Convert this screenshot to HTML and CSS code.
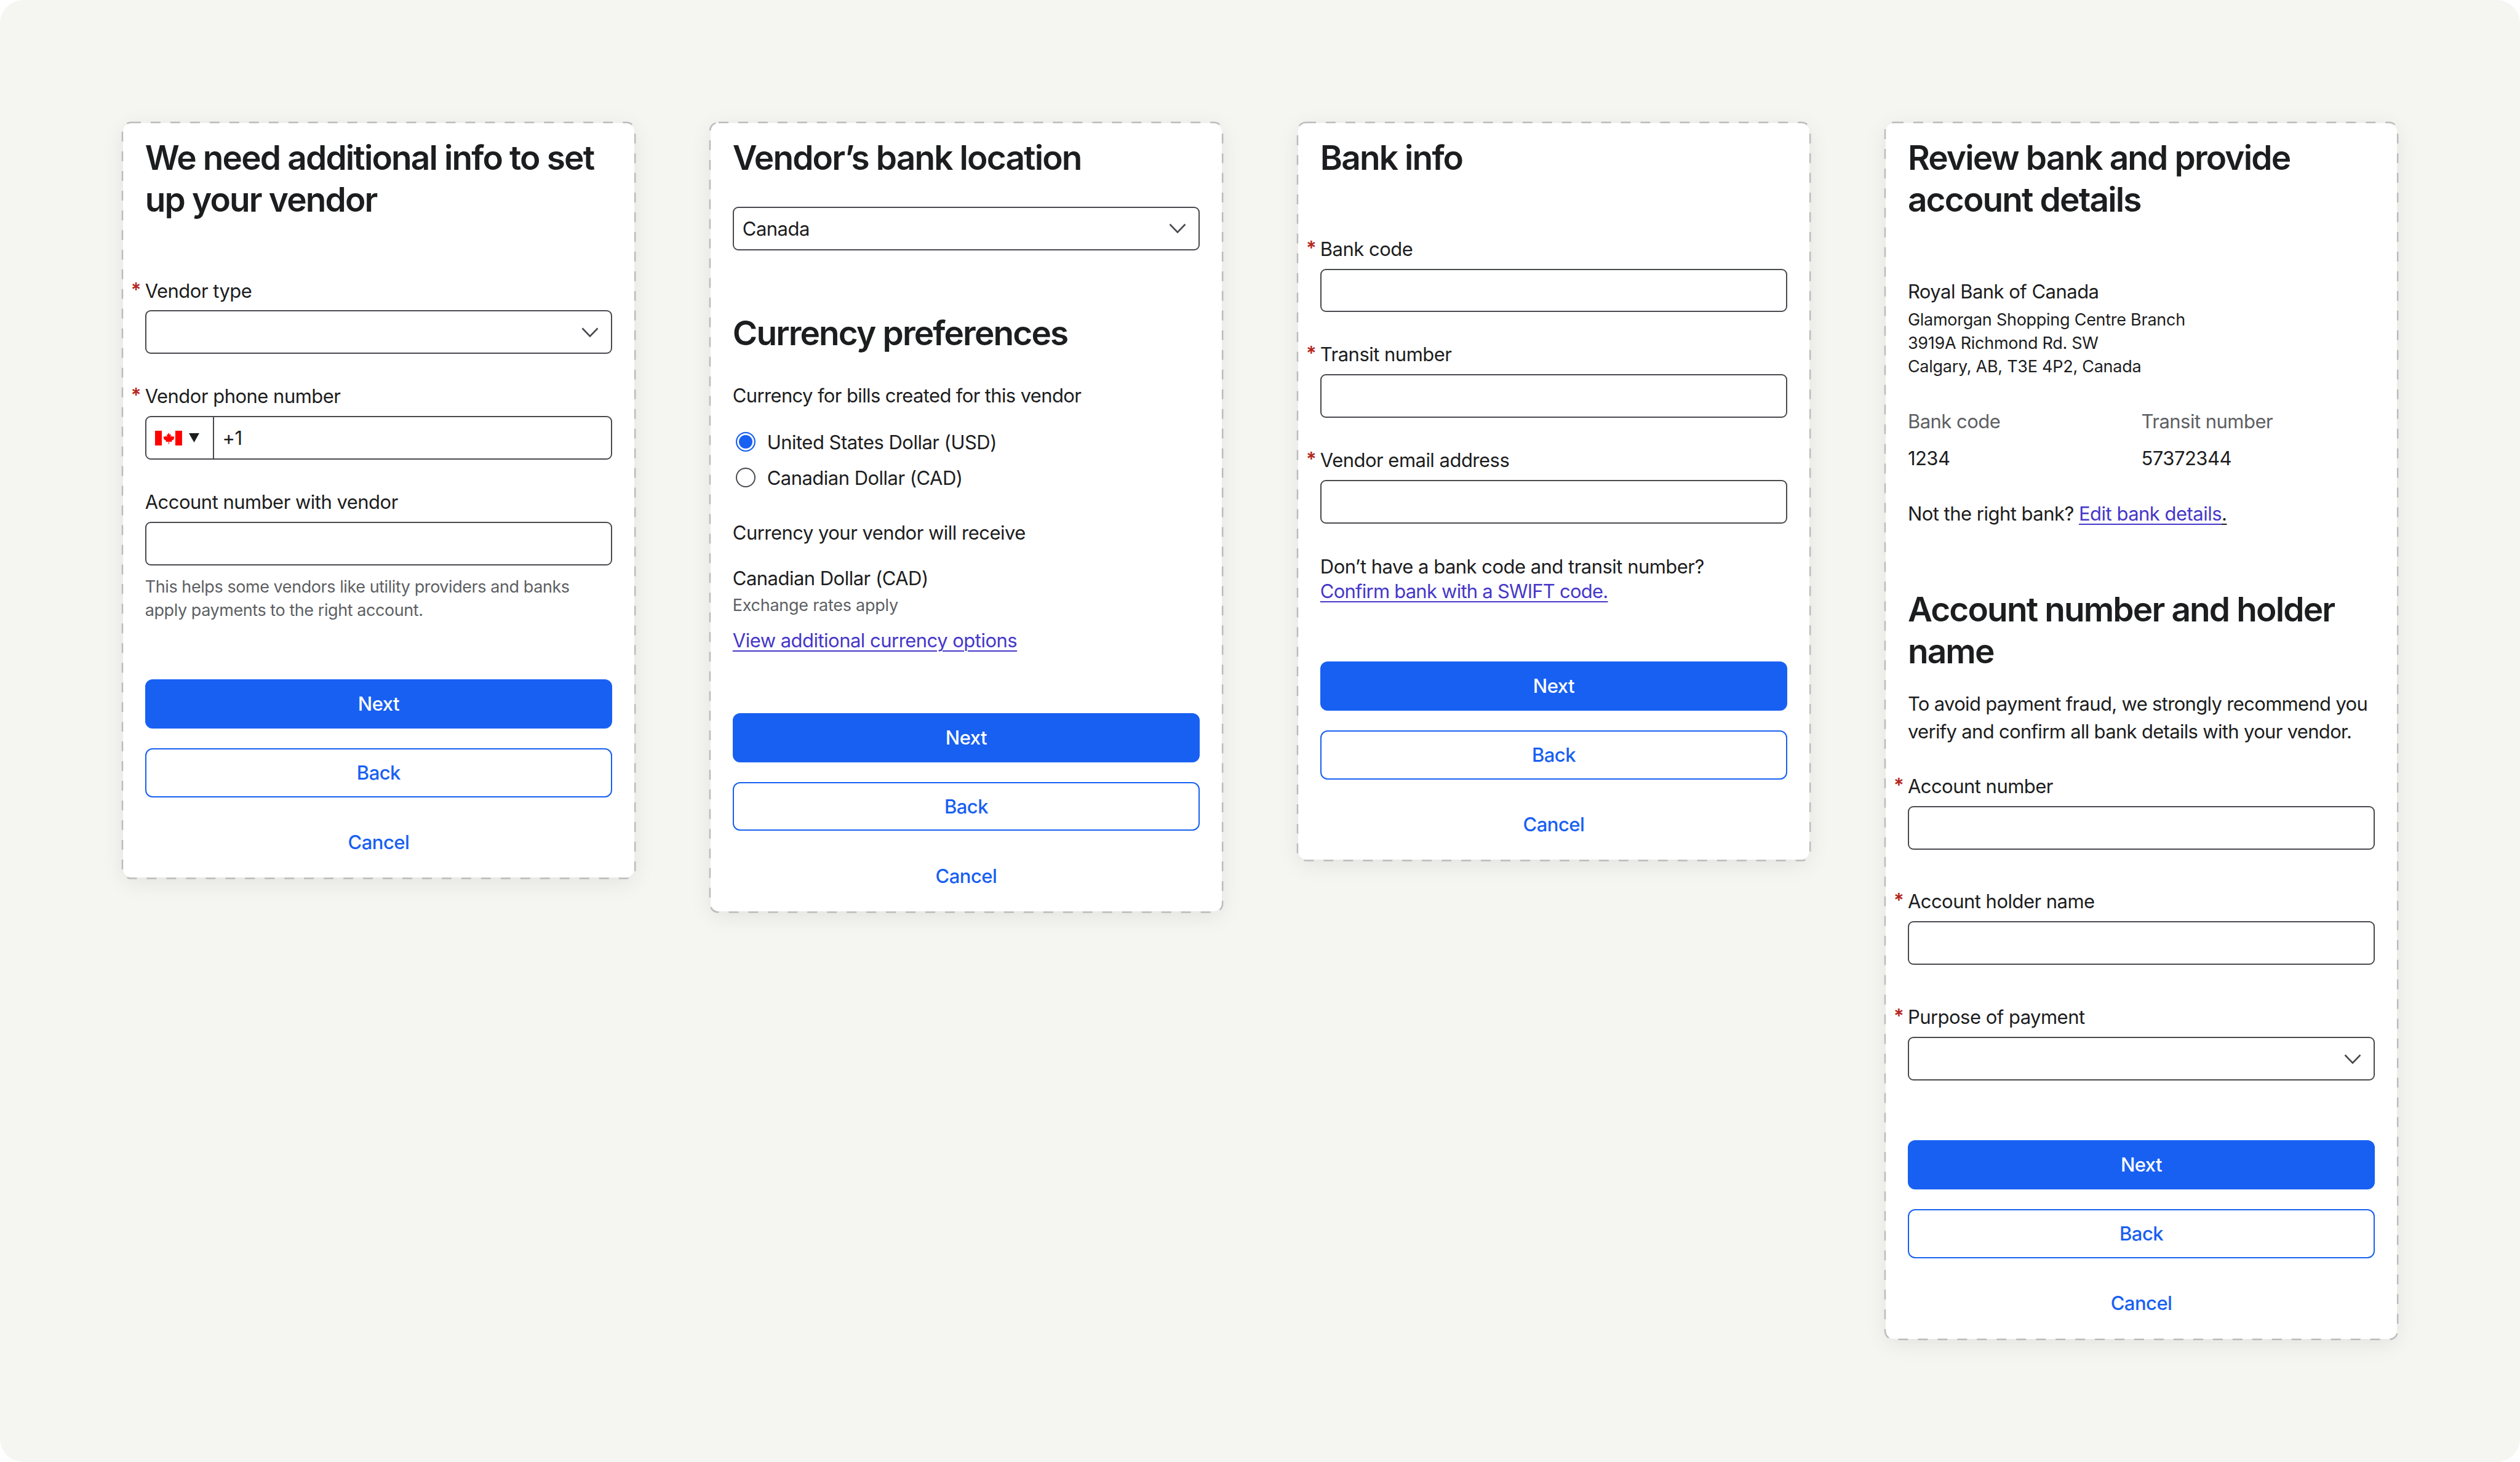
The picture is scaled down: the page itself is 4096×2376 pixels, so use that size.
FILE: index.html
```html
<!DOCTYPE html>
<html lang="en">
<head>
    <meta charset="UTF-8">
    <title>Vendor setup flow</title>
    <link rel="stylesheet" href="styles.css">
</head>
<body>
    <div class="canvas">
        <div class="card">
            <svg class="dashes"><rect width="100%" height="100%" rx="14"/></svg>
            <h1>We need additional info to set up your vendor</h1>
            <div class="field first required">
                <label>Vendor type</label>
                <div class="input select">
                    <svg class="chevron" viewBox="0 0 28 16"><path d="M1.5 1.5 14 14.5 26.5 1.5"/></svg>
                </div>
            </div>
            <div class="field required">
                <label>Vendor phone number</label>
                <div class="input phone">
                    <div class="flag-box">
                        <svg class="flag" viewBox="0 0 44 24">
                            <rect width="44" height="24" fill="#fff"/>
                            <rect width="11" height="24" fill="#f00"/>
                            <rect x="33" width="11" height="24" fill="#f00"/>
                            <path fill="#f00" d="M22 3l2 3.6 2-.9-.8 4.6 2.5-2.3.6 1.7 3.2-.5-1 3 1.1.7-4.7 3.7.5 1.7-4.4-.6V22h-1v-4.3l-4.4.6.5-1.7-4.7-3.7 1.1-.7-1-3 3.2.5.6-1.7 2.5 2.3-.8-4.6 2 .9z"/>
                        </svg>
                        <svg class="caret" viewBox="0 0 16 14"><path d="M0 0h16L8 14z"/></svg>
                    </div>
                    <span class="phone-code">+1</span>
                </div>
            </div>
            <div class="field">
                <label>Account number with vendor</label>
                <div class="input"></div>
                <p class="hint">This helps some vendors like utility providers and banks apply payments to the right account.</p>
            </div>
            <div class="actions actions-a">
                <a class="btn primary">Next</a>
                <a class="btn outline">Back</a>
                <a class="btn plain">Cancel</a>
            </div>
        </div>

        <div class="card">
            <svg class="dashes"><rect width="100%" height="100%" rx="14"/></svg>
            <h1>Vendor’s bank location</h1>
            <div class="input select country">
                <span>Canada</span>
                <svg class="chevron" viewBox="0 0 28 16"><path d="M1.5 1.5 14 14.5 26.5 1.5"/></svg>
            </div>
            <h1 class="second">Currency preferences</h1>
            <p class="text bills">Currency for bills created for this vendor</p>
            <div class="radio-row checked"><span class="radio"></span>United States Dollar (USD)</div>
            <div class="radio-row"><span class="radio"></span>Canadian Dollar (CAD)</div>
            <p class="text receive">Currency your vendor will receive</p>
            <p class="text cad">Canadian Dollar (CAD)</p>
            <p class="small muted rates">Exchange rates apply</p>
            <p class="text view"><a class="link">View additional currency options</a></p>
            <div class="actions actions-b">
                <a class="btn primary">Next</a>
                <a class="btn outline">Back</a>
                <a class="btn plain">Cancel</a>
            </div>
        </div>

        <div class="card">
            <svg class="dashes"><rect width="100%" height="100%" rx="14"/></svg>
            <h1>Bank info</h1>
            <div class="field first required">
                <label>Bank code</label>
                <div class="input"></div>
            </div>
            <div class="field required">
                <label>Transit number</label>
                <div class="input"></div>
            </div>
            <div class="field required">
                <label>Vendor email address</label>
                <div class="input"></div>
            </div>
            <p class="text swift">Don’t have a bank code and transit number?<br><a class="link">Confirm bank with a SWIFT code.</a></p>
            <div class="actions actions-c">
                <a class="btn primary">Next</a>
                <a class="btn outline">Back</a>
                <a class="btn plain">Cancel</a>
            </div>
        </div>

        <div class="card">
            <svg class="dashes"><rect width="100%" height="100%" rx="14"/></svg>
            <h1>Review bank and provide account details</h1>
            <p class="text bank-name">Royal Bank of Canada</p>
            <p class="small address">Glamorgan Shopping Centre Branch<br>3919A Richmond Rd. SW<br>Calgary, AB, T3E 4P2, Canada</p>
            <div class="codes">
                <div>
                    <p class="text muted">Bank code</p>
                    <p class="text code-value">1234</p>
                </div>
                <div>
                    <p class="text muted">Transit number</p>
                    <p class="text code-value">57372344</p>
                </div>
            </div>
            <p class="text wrong-bank">Not the right bank? <span class="link-wrap"><a class="link">Edit bank details</a>.</span></p>
            <h1 class="holder">Account number and holder name</h1>
            <p class="text fraud">To avoid payment fraud, we strongly recommend you verify and confirm all bank details with your vendor.</p>
            <div class="field required wide">
                <label>Account number</label>
                <div class="input"></div>
            </div>
            <div class="field required wide">
                <label>Account holder name</label>
                <div class="input"></div>
            </div>
            <div class="field required wide">
                <label>Purpose of payment</label>
                <div class="input select">
                    <svg class="chevron" viewBox="0 0 28 16"><path d="M1.5 1.5 14 14.5 26.5 1.5"/></svg>
                </div>
            </div>
            <div class="actions actions-d">
                <a class="btn primary">Next</a>
                <a class="btn outline">Back</a>
                <a class="btn plain">Cancel</a>
            </div>
        </div>
    </div>
</body>
</html>
```

FILE: styles.css
```css
html, body {
    margin: 0;
    padding: 0;
    background-color: #fff;
}
body {
    font-family: Inter, "Liberation Sans", sans-serif;
    color: #1c1d1e;
    overflow: hidden;
}
p, h1 {
    margin: 0;
}

/* everything below is in reference pixels, the zoom brings it to the window */
.canvas {
    zoom: 0.999;
    width: 4100px;
    height: 2378px;
    box-sizing: border-box;
    padding: 200px 200px 0 200px;
    display: flex;
    align-items: flex-start;
    justify-content: space-between;
    background-color: #f5f6f2;
    border-radius: 38px;
}
.card {
    position: relative;
    width: 832px;
    box-sizing: border-box;
    padding: 23px 36px 0;
    background-color: #fff;
    border-radius: 14px;
    box-shadow: 0 8px 36px rgba(0,0,0,0.08);
    letter-spacing: -0.5px;
}
.dashes {
    position: absolute;
    top: -1px;
    left: -1px;
    width: calc(100% + 2px);
    height: calc(100% + 2px);
    overflow: visible;
    fill: none;
    stroke: #bcbcbc;
    stroke-width: 2.5;
    stroke-dasharray: 16 16;
    pointer-events: none;
}
h1 {
    font-size: 55px;
    line-height: 68px;
    font-weight: 600;
    letter-spacing: -1.85px;
}

.field {
    position: relative;
    margin-top: 49px;
}
.field.first {
    margin-top: 94px;
}
.field.wide {
    margin-top: 65px;
}
.field label {
    display: block;
    font-size: 31px;
    line-height: 40px;
    margin-bottom: 12px;
}
.field.required label::before {
    content: "*";
    position: absolute;
    left: -23px;
    top: -2px;
    color: #b3261e;
    font-weight: 600;
}
.input {
    height: 71px;
    box-sizing: border-box;
    border: 2.5px solid #484a4e;
    border-radius: 9px;
    background-color: #fff;
}
.select {
    display: flex;
    align-items: center;
    justify-content: flex-end;
    padding: 0 20px 0 14px;
}
.select span {
    margin-right: auto;
    font-size: 31px;
}
.chevron {
    width: 28px;
    height: 16px;
    fill: none;
    stroke: #484a4e;
    stroke-width: 2.6;
}
.country {
    margin-top: 45px;
}
.phone {
    display: flex;
    align-items: center;
}
.flag-box {
    width: 110px;
    height: 100%;
    box-sizing: border-box;
    padding-left: 14px;
    display: flex;
    align-items: center;
    gap: 11px;
    border-right: 2.5px solid #484a4e;
}
.flag {
    width: 44px;
    height: 24px;
}
.caret {
    width: 17px;
    height: 15px;
    fill: #1c1d1e;
}
.phone-code {
    margin-left: 14px;
    font-size: 31px;
}
.hint {
    margin-top: 16px;
    font-size: 27px;
    line-height: 38px;
    letter-spacing: -0.42px;
    color: #5d5f63;
}

.text {
    font-size: 31px;
    line-height: 40px;
}
.small {
    font-size: 27px;
    line-height: 38px;
    letter-spacing: -0.25px;
}
.muted {
    color: #5d5f63;
}
.link {
    color: #4537c9;
    text-decoration: underline;
    text-underline-offset: 5px;
    text-decoration-thickness: 2px;
}
.link-wrap {
    text-decoration: underline;
    text-underline-offset: 5px;
    text-decoration-thickness: 2px;
}

.second {
    margin-top: 102px;
}
.bills {
    margin-top: 47px;
    letter-spacing: -0.62px;
}
.radio-row {
    display: flex;
    align-items: center;
    height: 58px;
    font-size: 31px;
}
.bills + .radio-row {
    margin-top: 26px;
}
.radio {
    width: 32px;
    height: 32px;
    box-sizing: border-box;
    margin: 0 19px 0 5px;
    border: 3px solid #484a4e;
    border-radius: 50%;
    background-color: #fff;
}
.checked .radio {
    border-color: #1860f2;
    background-color: #1860f2;
    box-shadow: inset 0 0 0 3px #fff;
}
.receive {
    margin-top: 41px;
}
.cad {
    margin-top: 34px;
}
.rates {
    margin-top: 5px;
}
.view {
    margin-top: 18px;
}
.swift {
    margin-top: 50px;
}
.swift .link {
    letter-spacing: -0.75px;
}

.bank-name {
    margin-top: 95px;
}
.address {
    margin-top: 8px;
}
.codes {
    display: grid;
    grid-template-columns: 1fr 1fr;
    margin-top: 50px;
}
.code-value {
    margin-top: 20px;
}
.wrong-bank {
    margin-top: 50px;
}
.holder {
    margin-top: 102px;
}
.fraud {
    margin-top: 29px;
    line-height: 45px;
    letter-spacing: -0.66px;
}
.fraud + .field.wide {
    margin-top: 46px;
}

.actions {
    display: flex;
    flex-direction: column;
    gap: 32px;
}
.actions-a {
    margin-top: 93px;
}
.actions-b {
    margin-top: 98px;
}
.actions-c {
    margin-top: 94px;
}
.actions-d {
    margin-top: 97px;
}
.btn {
    height: 80px;
    box-sizing: border-box;
    display: flex;
    align-items: center;
    justify-content: center;
    border-radius: 12px;
    font-size: 31px;
    font-weight: 500;
}
.primary {
    background-color: #1860f2;
    color: #fff;
}
.outline {
    border: 2.5px solid #1860f2;
    color: #1860f2;
}
.plain {
    color: #1860f2;
    height: 82px;
    margin-bottom: 17px;
}
```
